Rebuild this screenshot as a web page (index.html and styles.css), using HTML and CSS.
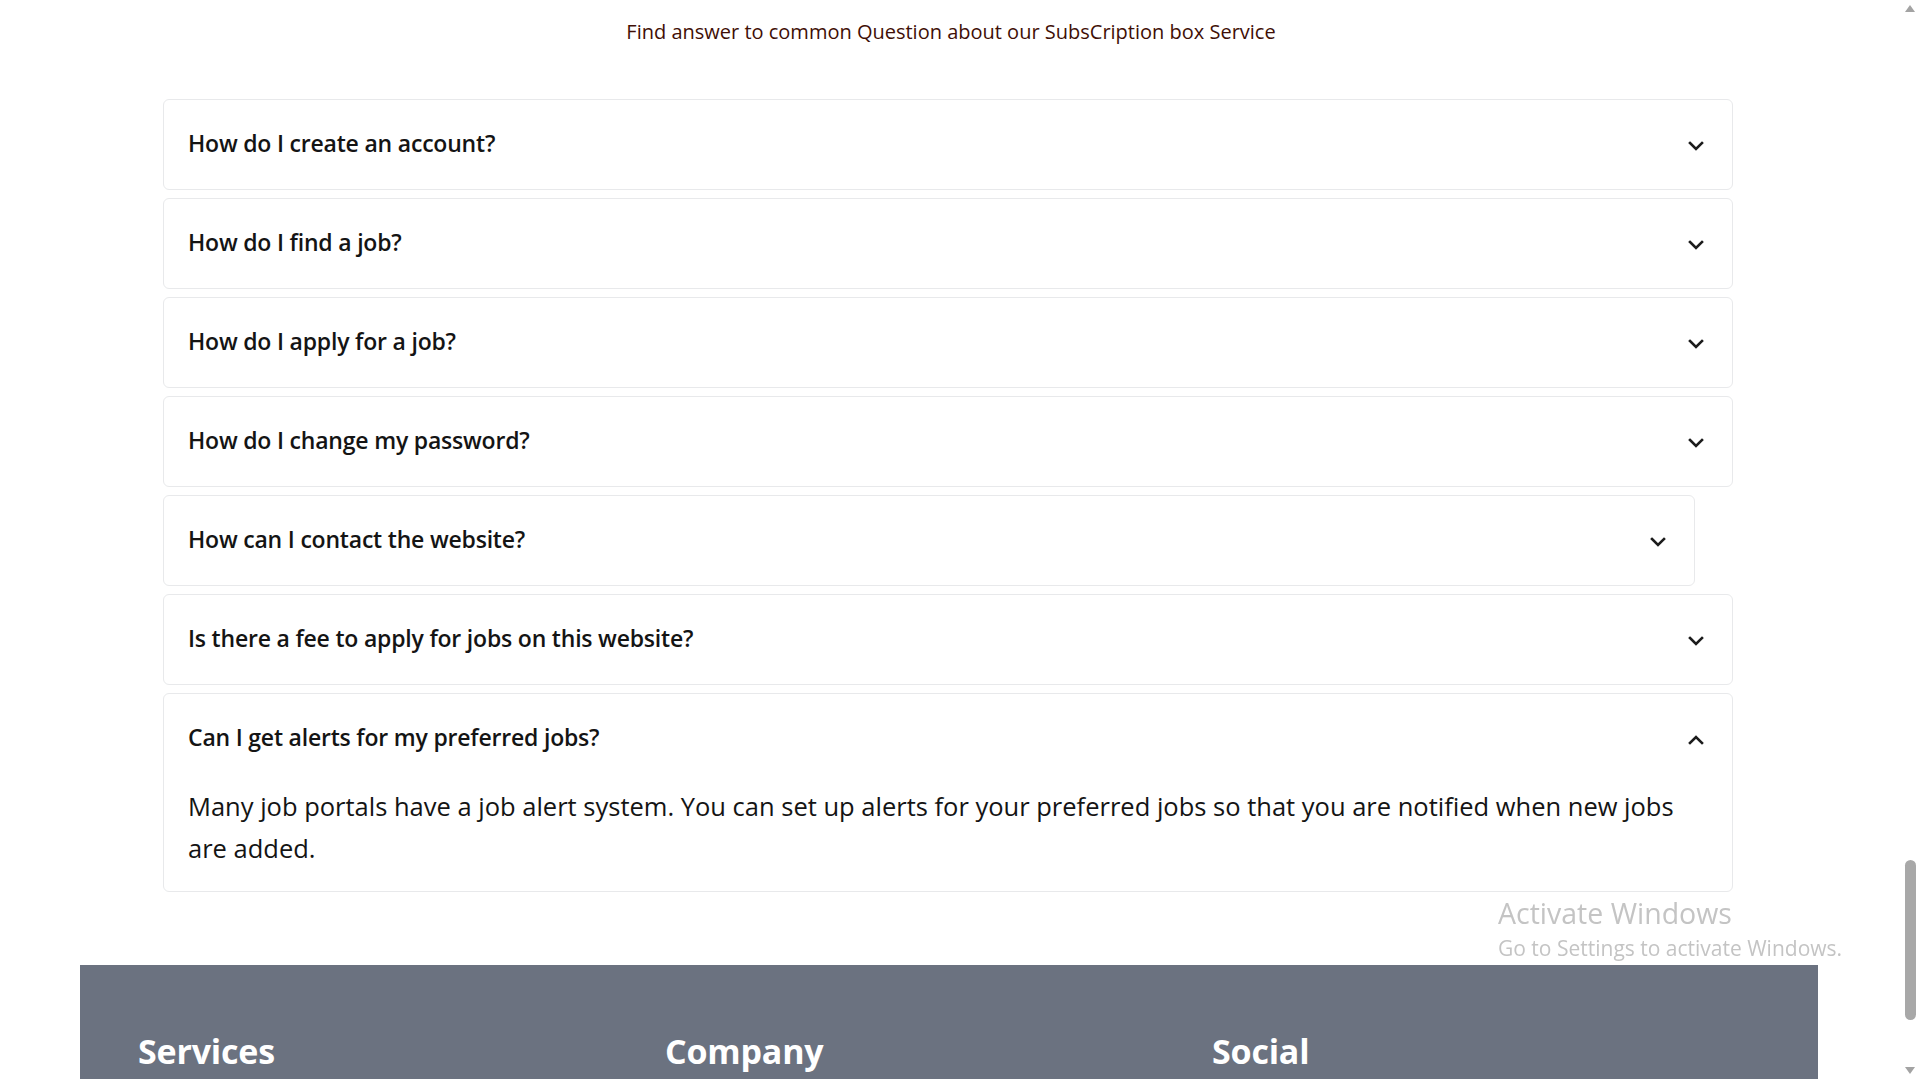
FILE: index.html
```html
<!DOCTYPE html>
<html lang="en">
<head>
<meta charset="utf-8">
<title>FAQ</title>
<link rel="stylesheet" href="styles.css">
</head>
<body>
<div class="page">
  <p class="subtitle">Find answer to common Question about our SubsCription box Service</p>

  <div class="faq-list">
    <div class="faq-item">
      <div class="faq-head"><span class="q">How do I create an account?</span><svg class="chev" viewBox="0 0 16 10"><polyline points="2,2 8,8 14,2"/></svg></div>
    </div>
    <div class="faq-item">
      <div class="faq-head"><span class="q">How do I find a job?</span><svg class="chev" viewBox="0 0 16 10"><polyline points="2,2 8,8 14,2"/></svg></div>
    </div>
    <div class="faq-item">
      <div class="faq-head"><span class="q">How do I apply for a job?</span><svg class="chev" viewBox="0 0 16 10"><polyline points="2,2 8,8 14,2"/></svg></div>
    </div>
    <div class="faq-item">
      <div class="faq-head"><span class="q">How do I change my password?</span><svg class="chev" viewBox="0 0 16 10"><polyline points="2,2 8,8 14,2"/></svg></div>
    </div>
    <div class="faq-item faq-item-narrow">
      <div class="faq-head"><span class="q">How can I contact the website?</span><svg class="chev" viewBox="0 0 16 10"><polyline points="2,2 8,8 14,2"/></svg></div>
    </div>
    <div class="faq-item">
      <div class="faq-head"><span class="q">Is there a fee to apply for jobs on this website?</span><svg class="chev" viewBox="0 0 16 10"><polyline points="2,2 8,8 14,2"/></svg></div>
    </div>
    <div class="faq-item">
      <div class="faq-head"><span class="q">Can I get alerts for my preferred jobs?</span><svg class="chev" viewBox="0 0 16 10"><polyline points="2,8 8,2 14,8"/></svg></div>
      <p class="answer">Many job portals have a job alert system. You can set up alerts for your preferred jobs so that you are notified when new jobs are added.</p>
    </div>
  </div>

  <footer class="footer">
    <div class="footer-grid">
      <h3 class="footer-title">Services</h3>
      <h3 class="footer-title">Company</h3>
      <h3 class="footer-title">Social</h3>
    </div>
  </footer>
</div>

<div class="activate">
  <div class="activate-title">Activate Windows</div>
  <div class="activate-sub">Go to Settings to activate Windows.</div>
</div>

<div class="scrollbar">
  <div class="sb-arrow sb-up"></div>
  <div class="sb-track"><div class="sb-thumb"></div></div>
  <div class="sb-arrow sb-down"></div>
</div>
</body>
</html>
```
FILE: styles.css
```css
html, body {
  margin: 0;
  padding: 0;
  background: #ffffff;
  overflow: hidden;
  height: 1079px;
}
body {
  font-family: "Open Sans", "Noto Sans", sans-serif;
  color: #111827;
}
.page {
  width: 1902px;
}
.subtitle {
  margin: 18px 0 0;
  text-align: center;
  font-size: 20px;
  line-height: 28px;
  color: #3f0f06;
}
.faq-list {
  margin: 53px 0 0 163px;
  width: 1570px;
  display: flex;
  flex-direction: column;
  gap: 8px;
}
.faq-item {
  border: 1px solid #e8e9eb;
  border-radius: 6px;
  background: #fff;
}
.faq-item-narrow {
  width: 1530px;
}
.faq-head {
  height: 89px;
  padding: 0 28px 0 24px;
  display: flex;
  align-items: center;
  justify-content: space-between;
}
.q {
  font-size: 23px;
  font-weight: 600;
  color: #141414;
  letter-spacing: -0.2px;
  margin-top: -3px;
}
.chev {
  width: 16px;
  height: 10px;
  margin-top: 3px;
  fill: none;
  stroke: #1c1c1c;
  stroke-width: 2.6;
  stroke-linecap: square;
}
.answer {
  margin: 0;
  padding: 3px 50px 22px 24px;
  font-size: 25.5px;
  line-height: 41.6px;
  color: #141414;
}
.footer {
  margin: 73px 0 0 80px;
  width: 1738px;
  height: 400px;
  background: #6b7280;
}
.footer-grid {
  display: grid;
  grid-template-columns: 527px 547px 1fr;
  padding: 66px 0 0 58px;
}
.footer-title {
  margin: 0;
  font-size: 34px;
  line-height: 40px;
  font-weight: 700;
  color: #ffffff;
  letter-spacing: -0.2px;
}
.activate {
  position: fixed;
  left: 1498px;
  top: 894px;
  color: #c4c4c4;
  font-family: "Open Sans", sans-serif;
}
.activate-title {
  font-size: 28.5px;
  line-height: 39px;
}
.activate-sub {
  font-size: 21px;
  line-height: 30px;
}
.scrollbar {
  position: fixed;
  top: 0;
  right: 0;
  width: 17px;
  height: 1079px;
  background: #ffffff;
  display: flex;
  flex-direction: column;
}
.sb-arrow {
  height: 17px;
  position: relative;
}
.sb-up::after, .sb-down::after {
  content: "";
  position: absolute;
  left: 3px;
  border-left: 5.5px solid transparent;
  border-right: 5.5px solid transparent;
}
.sb-up::after {
  top: 5px;
  border-bottom: 7px solid #a3a3a3;
}
.sb-down::after {
  top: 5px;
  border-top: 7px solid #a3a3a3;
}
.sb-track {
  flex: 1;
  position: relative;
}
.sb-thumb {
  position: absolute;
  left: 3px;
  width: 11px;
  top: 843px;
  height: 160px;
  border-radius: 6px;
  background: #a8a8a8;
}
```
